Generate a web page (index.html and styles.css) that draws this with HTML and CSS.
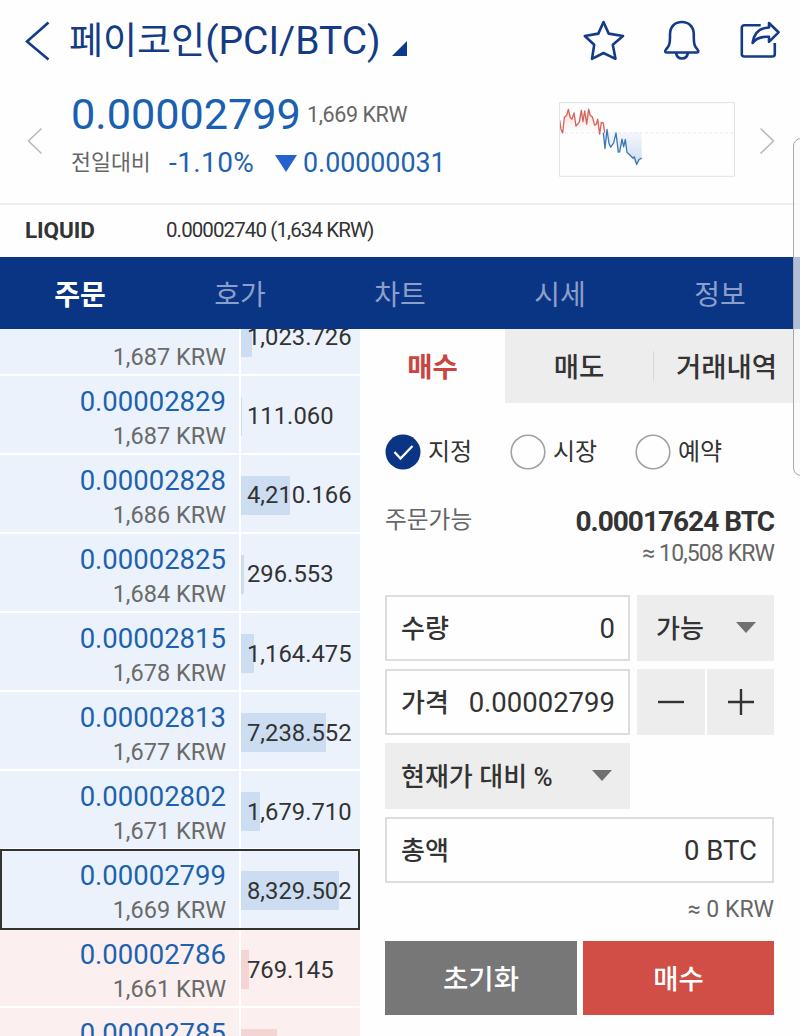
FILE: index.html
```
<!DOCTYPE html>
<html lang="ko">
<head>
  <meta charset="UTF-8">
  <meta name="viewport" content="width=device-width, initial-scale=1.0">
  <title>페이코인(PCI/BTC)</title>
  <link rel="stylesheet" href="styles.css">
</head>
<body>
  <header class="topbar">
    <svg class="back" viewBox="0 0 25 40"><path d="M23.500 1.500 2 20.500 23.500 38.500"/></svg>
    <h1 class="title">페이코인<span>(PCI/BTC)</span></h1>
    <span class="corner"></span>
    <div class="actions">
      <svg viewBox="0 0 44 44"><path d="M22.500 3 27.700 14.600 42 17 31.800 25.700 34.500 39.800 22.500 34 11 39.800 13.200 25.700 3.800 17 17.300 14.600Z"/></svg>
      <svg viewBox="0 0 44 44"><path d="M11 19v-3.500C11 7.500 16 3 22.800 3s12 4.500 12 12.500V19c0 7 1.200 8.500 3.700 11.500 1.700 2 .7 3-1.300 3H8.300c-2 0-3-1-1.300-3C9.500 27.500 11 26 11 19ZM17 33.500c.5 4 3 6 6 6s5.500-2 6-6"/></svg>
      <svg viewBox="0 0 44 44"><path d="M23.700 6.300H7.300a2.500 2.500 0 0 0-2.500 2.500V35a2.500 2.500 0 0 0 2.500 2.500h28A2.500 2.500 0 0 0 37.800 35V24M15.600 24C17 14 23 8.800 32 8.500V4L41.500 13.300 32 22.800V17.800C25 17.300 19 19.500 15.600 24Z"/></svg>
    </div>
  </header>

  <section class="summary">
    <svg class="prev" viewBox="0 0 16 28"><path d="M14.500 1.500 1.500 14 14.500 26.500"/></svg>
    <div class="quote">
      <div class="now"><strong>0.00002799</strong><span>1,669 KRW</span></div>
      <div class="change">
        <span class="label">전일대비</span>
        <span class="rate">-1.10%</span>
        <i class="down"></i>
        <span class="diff">0.00000031</span>
      </div>
    </div>
    <svg class="spark" viewBox="57 306 528 224">
      <defs>
        <linearGradient id="up" x1="0" y1="0" x2="0" y2="1"><stop offset="0" stop-color="#f8dcd9"/><stop offset="1" stop-color="#fff"/></linearGradient>
        <linearGradient id="dn" x1="0" y1="0" x2="0" y2="1"><stop offset="0" stop-color="#f4f7fc"/><stop offset="1" stop-color="#cddcf0"/></linearGradient>
      </defs>
      <path fill="url(#up)" d="M59 360 68 398 76 350 85 328 94 358 102 338 109 376 124 328 130 365 146 328 164 374 172 358 188 368 200 398H59Z"/>
      <path fill="url(#dn)" d="M190 398 196 445 202 400 212 440 228 400 236 454 255 420 268 464 290 492 305 474V398Z"/>
      <path class="base" d="M59 398H583"/>
      <path class="red" d="M59 360 63 388 68 398 73 352 80 345 85 328 91 352 96 357 102 338 108 378 118 366 124 330 129 364 134 332 140 372 146 327 151 346 157 350 164 375 169 372 173 357 179 402 184 367 190 368 194 398"/>
      <path class="blue" d="M190 398 195 445 201 388 207 430 212 441 221 428 228 398 235 456 239 455 246 417 251 440 256 418 261 456 272 467 279 474 283 470 290 493 297 478 305 474"/>
      <rect x="58.500" y="307.500" width="525" height="221"/>
    </svg>
    <svg class="next" viewBox="0 0 16 28"><path d="M1.500 1.500 14.500 14 1.500 26.500"/></svg>
  </section>

  <div class="liquid"><b>LIQUID</b><span>0.00002740 (1,634 KRW)</span></div>

  <nav class="tabs">
    <a class="on">주문</a><a>호가</a><a>차트</a><a>시세</a><a>정보</a>
  </nav>

  <main class="board">
    <div class="book">
      <div class="row">
        <div class="price"><span>1,687 KRW</span></div>
        <div class="qty"><i class="bar" style="width:11px"></i><span>1,023.726</span></div>
      </div>
      <div class="row">
        <div class="price"><b>0.00002829</b><span>1,687 KRW</span></div>
        <div class="qty"><i class="bar" style="width:1px"></i><span>111.060</span></div>
      </div>
      <div class="row">
        <div class="price"><b>0.00002828</b><span>1,686 KRW</span></div>
        <div class="qty"><i class="bar" style="width:49px"></i><span>4,210.166</span></div>
      </div>
      <div class="row">
        <div class="price"><b>0.00002825</b><span>1,684 KRW</span></div>
        <div class="qty"><i class="bar" style="width:3px"></i><span>296.553</span></div>
      </div>
      <div class="row">
        <div class="price"><b>0.00002815</b><span>1,678 KRW</span></div>
        <div class="qty"><i class="bar" style="width:13px"></i><span>1,164.475</span></div>
      </div>
      <div class="row">
        <div class="price"><b>0.00002813</b><span>1,677 KRW</span></div>
        <div class="qty"><i class="bar" style="width:85px"></i><span>7,238.552</span></div>
      </div>
      <div class="row">
        <div class="price"><b>0.00002802</b><span>1,671 KRW</span></div>
        <div class="qty"><i class="bar" style="width:19px"></i><span>1,679.710</span></div>
      </div>
      <div class="row current">
        <div class="price"><b>0.00002799</b><span>1,669 KRW</span></div>
        <div class="qty"><i class="bar" style="width:98px"></i><span>8,329.502</span></div>
      </div>
      <div class="row bid">
        <div class="price"><b>0.00002786</b><span>1,661 KRW</span></div>
        <div class="qty"><i class="bar" style="width:8px"></i><span>769.145</span></div>
      </div>
      <div class="row bid">
        <div class="price"><b>0.00002785</b></div>
        <div class="qty"><i class="bar" style="width:36px"></i></div>
      </div>
    </div>

    <div class="order">
      <div class="modes"><a class="on">매수</a><a>매도</a><a class="history">거래내역</a></div>
      <div class="types">
        <label><svg class="checked" viewBox="0 0 36 36"><circle cx="18" cy="18" r="17.500"/><path d="M9.500 18 15.500 24.500 27.500 12"/></svg>지정</label>
        <label><svg viewBox="0 0 36 36"><circle cx="18" cy="18" r="16.800"/></svg>시장</label>
        <label><svg viewBox="0 0 36 36"><circle cx="18" cy="18" r="16.800"/></svg>예약</label>
      </div>
      <div class="avail"><span>주문가능</span><b>0.00017624 BTC</b></div>
      <div class="avail-krw">≈ 10,508 KRW</div>
      <div class="fields">
        <div class="field"><span>수량</span><em>0</em></div>
        <div class="select">가능<i class="caret"></i></div>
        <div class="field"><span>가격</span><em>0.00002799</em></div>
        <div class="steps">
          <button><svg viewBox="0 0 26 26"><path d="M0 13H26"/></svg></button>
          <button><svg viewBox="0 0 26 26"><path d="M0 13H26M13 0V26"/></svg></button>
        </div>
        <div class="select percent">현재가 대비 %<i class="caret"></i></div>
        <div class="field total"><span>총액</span><em>0 BTC</em></div>
      </div>
      <div class="total-krw">≈ 0 KRW</div>
      <div class="buttons"><button class="reset">초기화</button><button class="buy">매수</button></div>
    </div>
  </main>

  <div class="edge"></div>
</body>
</html>
```
FILE: styles.css
```
* {
  box-sizing: border-box;
}

body {
  margin: 0;
  width: 800px;
  height: 1036px;
  overflow: hidden;
  position: relative;
  background: #fefefe;
  color: #333;
  font-family: Roboto, "Noto Sans CJK KR", sans-serif;
  line-height: 1;
  white-space: nowrap;
}

svg {
  display: block;
  flex: none;
  fill: none;
}

i, em {
  font-style: normal;
}

button {
  border: 0;
  padding: 0;
  font: inherit;
}

/* header */
.topbar {
  display: flex;
  align-items: center;
  height: 82px;
  padding: 0 19px 0 25px;
  color: #143c86;
}

.back {
  width: 25px;
  height: 40px;
  stroke: #143c86;
  stroke-width: 2.6;
}

.title {
  margin: 0 0 0 19px;
  width: 314px;
  font-size: 37px;
  font-weight: 400;
  line-height: 83px;
}

.title span {
  font-size: 39px;
}

.corner {
  margin: 15px 0 0 9px;
  border-left: 15px solid transparent;
  border-bottom: 15px solid #0b3a90;
}

.actions {
  display: flex;
  gap: 34px;
  margin-left: auto;
}

.actions svg {
  width: 44px;
  height: 44px;
  stroke: #143c86;
  stroke-width: 2.6;
  stroke-linejoin: round;
}

.summary {
  display: flex;
  height: 123px;
  border-bottom: 2px solid #eee;
}

.prev, .next {
  width: 16px;
  height: 28px;
  margin-top: 45px;
  stroke: #bbb;
  stroke-width: 1.6;
}

.prev {
  margin-left: 27px;
}

.next {
  margin-left: 24px;
}

.quote {
  width: 516px;
  padding-left: 28px;
}

.now {
  display: flex;
  height: 61px;
  line-height: 65px;
  font-size: 21.5px;
  letter-spacing: -.4px;
  color: #666;
}

.now strong {
  width: 236px;
  font-size: 43.2px;
  font-weight: 400;
  letter-spacing: 0;
  color: #1a60b0;
}

.change {
  display: flex;
  align-items: center;
  height: 40px;
  font-size: 26.8px;
  color: #1f62b2;
}

.label {
  width: 98px;
  font-size: 21.700px;
  color: #666;
}

.rate {
  width: 106px;
  font-size: 28px;
  letter-spacing: .4px;
}

.down {
  margin-right: 6px;
  border: 11px solid transparent;
  border-top: 17px solid #2463cc;
  border-bottom: 0;
}

.spark {
  width: 176px;
  height: 75px;
  margin-top: 20px;
}

.spark path, .spark rect {
  stroke-width: 4;
  stroke-linejoin: round;
}

.spark rect {
  stroke: #e2e2e2;
  stroke-width: 3;
}

.spark .base {
  stroke: #ddd;
  stroke-width: 2;
  stroke-dasharray: 8 8;
}

.spark .red {
  stroke: #d2655e;
}

.spark .blue {
  stroke: #3b78b5;
}

.liquid {
  display: flex;
  align-items: center;
  height: 52px;
  padding: 0 0 1px 25px;
  font-size: 20.5px;
  letter-spacing: -.9px;
}

.liquid b {
  width: 141px;
  font-size: 22.5px;
  letter-spacing: -.1px;
}

/* main tabs */
.tabs {
  display: grid;
  grid-template-columns: repeat(5, 160px);
  height: 72px;
  background: #0a3585;
  color: #8c9fca;
  font-size: 28px;
  line-height: 77px;
  text-align: center;
}

.tabs .on {
  color: #fff;
  font-weight: 700;
}

.board {
  display: flex;
  height: 707px;
}

/* order book, scrolled so that the first row is cut */
.book {
  display: flex;
  flex-direction: column;
  position: relative;
  width: 360px;
  overflow: hidden;
}

.row {
  display: flex;
  flex: none;
  gap: 2px;
  height: 79.1px;
  border-bottom: 2px solid #fff;
  background: #fff;
}

.row:first-child {
  margin-top: -32.500px;
}

.row:first-child .price {
  padding-top: 41px;
}

.price, .qty {
  background: #ebf2fb;
}

.price {
  display: flex;
  flex-direction: column;
  align-items: flex-end;
  width: 239px;
  padding: 11px 13px 0 0;
}

.price b {
  font-size: 27.5px;
  font-weight: 400;
  line-height: 30px;
  color: #1c62b0;
}

.price span {
  margin-top: 5px;
  font-size: 23.5px;
  line-height: 28px;
  color: #6a6a6a;
}

.qty {
  display: flex;
  align-items: center;
  width: 119px;
  padding-top: 4px;
  font-size: 23.8px;
}

.qty span {
  position: relative;
  left: 6px;
  top: 1px;
}

/* the bar takes no width in the row, the amount is written over it */
.bar {
  position: absolute;
  height: 39px;
  background: #ccddf1;
}

.bid .price, .bid .qty {
  background: #fbefef;
}

.bid .bar {
  background: #f4d5d4;
}

.current {
  outline: 2px solid #333;
  outline-offset: -2px;
  height: 81px;
  margin: -1px 0 -1px;
  z-index: 1;
}

.current .price {
  padding-top: 12px;
}

/* order form */
.order {
  width: 440px;
}

.modes {
  display: grid;
  grid-template-columns: 145px 148px 147px;
  grid-template-rows: 74px;
  font-size: 27.5px;
  font-weight: 500;
  line-height: 78px;
  text-align: center;
}

.modes a {
  background: #ededed;
}

.modes .on {
  background: none;
  color: #c9453f;
  font-weight: 700;
}

.modes .history {
  background: linear-gradient(#d8d8d8, #d8d8d8) 0 22px / 1px 30px no-repeat #ededed;
}

.types {
  display: grid;
  grid-template-columns: repeat(3, 125px);
  padding: 31px 0 0 25px;
  font-size: 24px;
}

.types label {
  display: flex;
  align-items: center;
  gap: 7px;
  line-height: 38px;
  height: 36px;
}

.types svg {
  width: 36px;
  height: 36px;
}

.types circle {
  stroke: #a2a2a2;
  stroke-width: 1.6;
}

.types .checked circle {
  fill: #0a3585;
  stroke: none;
}

.types .checked path {
  stroke: #fff;
  stroke-width: 2.3;
}

.avail {
  display: flex;
  justify-content: space-between;
  align-items: center;
  height: 40px;
  margin-top: 31px;
  padding: 0 26px 0 25px;
  font-size: 23.700px;
  color: #666;
}

.avail b {
  padding-top: 2px;
  font-size: 28px;
  letter-spacing: -1px;
  color: #333;
}

.avail-krw, .total-krw {
  padding-right: 26px;
  font-size: 23px;
  line-height: 26px;
  height: 24px;
  text-align: right;
  color: #666;
}

.avail-krw {
  letter-spacing: -.9px;
}

.fields {
  display: grid;
  grid-template-columns: 245px 137px;
  grid-auto-rows: 66px;
  gap: 8px 7px;
  padding: 30px 0 0 25px;
  font-size: 27.5px;
}

.field, .select {
  display: flex;
  justify-content: space-between;
  align-items: center;
}

.field {
  padding: 2px 13px 0 14px;
  border: 2px solid #ddd;
}

.field span, .select {
  font-size: 26px;
  font-weight: 500;
}

.select {
  padding: 2px 18px 0 19px;
  background: #ededed;
}

.percent {
  padding-left: 16px;
}

.caret {
  margin-top: -3px;
  border: 10px solid transparent;
  border-top: 11px solid #707070;
  border-bottom: 0;
}

.steps {
  display: grid;
  grid-template-columns: 68px 67px;
  gap: 2px;
}

.steps button {
  display: grid;
  place-items: center;
  background: #ededed;
}

.steps svg {
  width: 26px;
  height: 26px;
  stroke: #333;
  stroke-width: 2.4;
}

.total {
  grid-column: 1 / 3;
  width: 389px;
  padding-right: 15px;
}

.total-krw {
  margin-top: 14px;
}

.buttons {
  display: grid;
  grid-template-columns: 192px 191px;
  gap: 6px;
  height: 74px;
  margin: 20px 0 0 25px;
}

.buttons button {
  padding-top: 3px;
  font-size: 27.5px;
  font-weight: 500;
  color: #fff;
}

.reset {
  background: #777;
}

.buy {
  background: #d04e45;
}

/* edge panel handle, lies over the page */
.edge {
  position: absolute;
  top: 138px;
  right: -10px;
  width: 17px;
  height: 338px;
  border: 1px solid #aaa;
  border-radius: 8px;
  background: rgba(250, 250, 250, .7);
}
```
